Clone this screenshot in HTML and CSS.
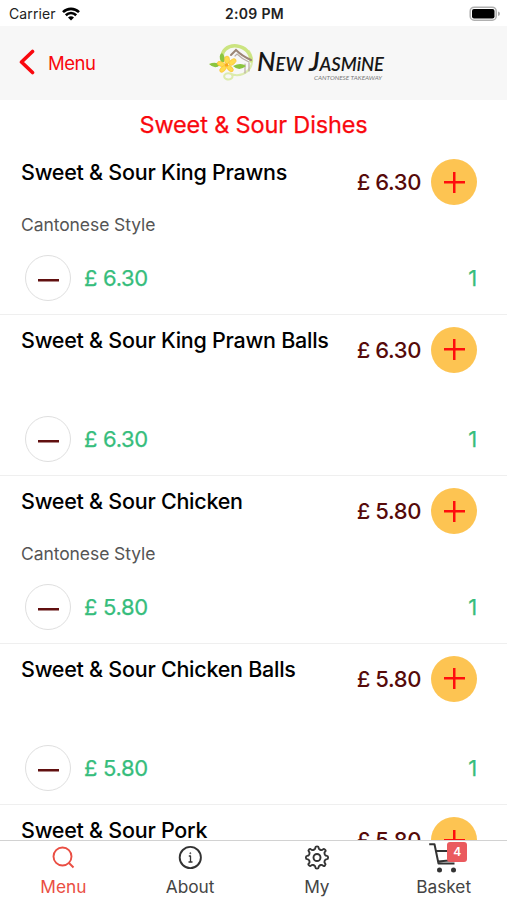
FILE: index.html
```html
<!DOCTYPE html>
<html lang="en">
<head>
<meta charset="utf-8">
<title>New Jasmine</title>
<link rel="stylesheet" href="styles.css">
</head>
<body>
<div class="app">
  <div class="status">
    <div class="carrier">Carrier
      <svg width="18" height="14" viewBox="0 0 18 14" fill="none" stroke="#000" stroke-width="2.6"><path d="M1 5.2C5.5.7 12.500.7 17 5.200M3.800 8.200C6.800 5.300 11.200 5.300 14.200 8.200"/><path d="M9 13.500 6 10.500Q9 7.900 12 10.500Z" fill="#000" stroke="none"/></svg>
    </div>
    <div class="clock">2:09 PM</div>
    <svg class="battery" width="32" height="16" viewBox="0 0 32 16"><rect x="2.200" y="1.200" width="26" height="13" rx="4" fill="#fff" stroke="#b0b0b0" stroke-width="1.500"/><rect x="4" y="3" width="22.500" height="9.500" rx="2" fill="#000"/><path d="M30 5.500q2 .5 2 2.300t-2 2.300z" fill="#aaa"/></svg>
  </div>
  <header class="header">
    <a class="back">
      <svg width="16" height="26" viewBox="0 0 16 26" fill="none" stroke="#f9080e" stroke-width="3.600" stroke-linecap="round" stroke-linejoin="round"><path d="M13.500 2.500 2.500 13 13.500 23.500"/></svg>
      <span>Menu</span>
    </a>
    <svg class="logo" width="180" height="44" viewBox="0 0 180 44">
      <g fill="none" stroke-linecap="round">
        <path d="M41 10c6 9 3 19-6 23-5 2-10 1-13-.5-5-1-8 3-4 5.500 4 1.500 8-1 6-4" stroke="#dcebad" stroke-width="2"/>
        <path d="M15 18C12 10 20 4 29 5c8 1 14 7 14 15" stroke="#cbe480" stroke-width="3.500"/>
        <path d="M23 14 28 9q6 6 15 10" stroke="#9b8576" stroke-width="2"/>
        <path d="M27 15l2-2q5 5 12 8M37 23v9M41 22v8" stroke="#b9ada5" stroke-width="1.200"/>
      </g>
      <path d="M1 23q7-3 11 1-5 5-11-1M25 25q8-4 13 0-7 6-13 0M13 21q-3-7 1-9 4 4 2 9" fill="#8bc53f"/>
      <g fill="#ffdb4d" stroke="#f7b92c" stroke-width=".5"><ellipse cx="19" cy="19" rx="2.600" ry="4"/><ellipse cx="13" cy="23" rx="4" ry="2.300" transform="rotate(20 13 23)"/><ellipse cx="24.500" cy="21" rx="4.200" ry="2.500" transform="rotate(-40 24.500 21)"/><ellipse cx="15" cy="28" rx="4" ry="2.300" transform="rotate(-45 15 28)"/><ellipse cx="22" cy="27.500" rx="4" ry="2.300" transform="rotate(45 22 27.500)"/></g>
      <circle cx="18.500" cy="24" r="1.700" fill="#f9a51e"/>
      <g class="wordmark">
        <text x="49" y="30" textLength="46" lengthAdjust="spacingAndGlyphs"><tspan class="cap">N</tspan>EW</text>
        <text x="101" y="30" textLength="75" lengthAdjust="spacingAndGlyphs"><tspan class="cap">J</tspan>ASMiNE</text>
      </g>
      <text class="tagline" x="106" y="38.500" textLength="68" lengthAdjust="spacingAndGlyphs">CANTONESE TAKEAWAY</text>
    </svg>
  </header>
  <main class="list">
    <h1>Sweet &amp; Sour Dishes</h1>
    <section class="item">
      <div class="top"><div class="name">Sweet &amp; Sour King Prawns</div><div class="price">£ 6.30</div><button class="add"></button></div>
      <div class="desc">Cantonese Style</div>
      <div class="bottom"><button class="remove"></button><div class="total">£ 6.30</div><div class="qty">1</div></div>
    </section>
    <section class="item short">
      <div class="top"><div class="name">Sweet &amp; Sour King Prawn Balls</div><div class="price">£ 6.30</div><button class="add"></button></div>
      <div class="bottom"><button class="remove"></button><div class="total">£ 6.30</div><div class="qty">1</div></div>
    </section>
    <section class="item">
      <div class="top"><div class="name">Sweet &amp; Sour Chicken</div><div class="price">£ 5.80</div><button class="add"></button></div>
      <div class="desc">Cantonese Style</div>
      <div class="bottom"><button class="remove"></button><div class="total">£ 5.80</div><div class="qty">1</div></div>
    </section>
    <section class="item short">
      <div class="top"><div class="name">Sweet &amp; Sour Chicken Balls</div><div class="price">£ 5.80</div><button class="add"></button></div>
      <div class="bottom"><button class="remove"></button><div class="total">£ 5.80</div><div class="qty">1</div></div>
    </section>
    <section class="item">
      <div class="top"><div class="name">Sweet &amp; Sour Pork</div><div class="price">£ 5.80</div><button class="add"></button></div>
    </section>
  </main>
  <nav class="tabs">
    <a class="tab active"><svg width="32" height="32" viewBox="0 0 32 32"><circle cx="15.500" cy="15.500" r="9"/><path d="m22 22 4.500 4.500"/></svg><span>Menu</span></a>
    <a class="tab"><svg width="32" height="32" viewBox="0 0 32 32"><circle cx="16.300" cy="16.500" r="10.600"/><path d="M14.800 15h1.700v6M14.500 21h4" stroke-width="1.300"/><circle cx="16.300" cy="12.200" r=".5" stroke-width="1"/></svg><span>About</span></a>
    <a class="tab"><svg width="32" height="32" viewBox="0 0 32 32"><path d="M13.400 8.500Q14.400 8 14.400 6.500Q14.400 5.400 16 5.400T17.600 6.500Q17.600 8 18.600 8.500L19.900 9Q21 9.400 22 8.300Q22.800 7.500 24 8.600T24.200 10.500Q23.100 11.500 23.500 12.600L24 13.900Q24.500 14.900 26 14.900Q27.100 14.900 27.100 16.500T26 18.100Q24.500 18.100 24 19.100L23.500 20.400Q23.100 21.500 24.200 22.500Q25 23.300 23.900 24.500T22 24.700Q21 23.600 19.900 24L18.600 24.500Q17.600 25 17.600 26.500Q17.600 27.600 16 27.600T14.400 26.500Q14.400 25 13.400 24.500L12.100 24Q11 23.600 10 24.700Q9.200 25.500 8 24.400T7.800 22.500Q8.900 21.500 8.500 20.400L8 19.100Q7.500 18.100 6 18.100Q4.900 18.100 4.900 16.500T6 14.900Q7.500 14.900 8 13.900L8.500 12.600Q8.900 11.500 7.800 10.500Q7 9.700 8.100 8.500T10 8.300Q11 9.400 12.100 9Z"/><circle cx="16" cy="16.500" r="3.500"/></svg><span>My</span></a>
    <a class="tab"><svg width="32" height="32" viewBox="0 0 32 32"><path d="M1.200 3.200h5.300l4 19.300h16M8 10h20.500l-2 9L10 20.500" stroke-width="2"/><circle cx="11.500" cy="29" r="2.500" class="wheel"/><circle cx="25.500" cy="29" r="2.500" class="wheel"/></svg><i class="badge">4</i><span>Basket</span></a>
  </nav>
</div>
</body>
</html>
```
FILE: styles.css
```css
* { box-sizing: border-box; }
body { margin: 0; font-family: Inter, "Liberation Sans", sans-serif; background: #fff; }
.app { width: 507px; height: 900px; display: flex; flex-direction: column; overflow: hidden; }
.status { height: 26px; flex: none; display: grid; grid-template-columns: 1fr auto 1fr; align-items: center; padding: 1px 7px 0 9px; font-size: 14px; color: #222; }
.carrier { display: flex; align-items: center; gap: 6px; letter-spacing: .1px; }
.clock { font-weight: 600; font-size: 14px; letter-spacing: .3px; }
.battery { justify-self: end; }
.header { height: 74px; flex: none; background: #f7f7f7; display: flex; align-items: center; }
.back { width: 208px; padding-left: 19px; display: flex; align-items: center; gap: 13px; color: #f9080e; font-size: 18.5px; letter-spacing: -.5px; }
.back svg { margin-top: -3px; }
.logo { margin-top: -1px; }
.wordmark { font: italic 600 19px Lato, sans-serif; fill: #171717; }
.cap { font-size: 27px; }
.tagline { font: italic 6px Lato, sans-serif; fill: #777; }
.list { flex: 1; min-height: 0; overflow: hidden; }
h1 { margin: 0; height: 47px; line-height: 49px; text-align: center; font-size: 23.5px; font-weight: 400; letter-spacing: -.15px; color: #f9080e; -webkit-text-stroke: .25px #f9080e; }
.item { height: 167.500px; border-bottom: 1px solid #efefef; padding: 12px 30px 13px 21px; display: flex; flex-direction: column; }
.item.short { height: 161.500px; }
.top { display: flex; height: 46px; flex: none; }
.name { flex: 1; font-size: 21.5px; line-height: 27px; font-weight: 500; letter-spacing: -.26px; white-space: nowrap; color: #000; }
.price { font-size: 22px; line-height: 46px; font-weight: 500; letter-spacing: -.4px; color: #560a0a; margin-right: 10px; }
button { width: 46px; height: 46px; flex: none; border: 0; border-radius: 50%; padding: 0; }
.add { background: linear-gradient(#ff0d0d, #ff0d0d) center / 21px 2.500px no-repeat, linear-gradient(#ff0d0d, #ff0d0d) center / 2.500px 21px no-repeat, #fdc452; }
.desc { margin-top: 8px; font-size: 17.5px; line-height: 24px; letter-spacing: -.08px; color: #555; }
.bottom { display: flex; align-items: center; margin-top: auto; padding-left: 4px; }
.remove { border: 1px solid #dfdfdf; background: linear-gradient(#611010, #611010) center 23px / 21px 2.500px no-repeat, #fff; }
.total, .qty { font-size: 22px; line-height: 46px; letter-spacing: -.3px; color: #36bd7c; -webkit-text-stroke: .25px #36bd7c; }
.total { margin-left: 13px; flex: 1; }
.tabs { height: 60px; flex: none; border-top: 1px solid #d2d2d2; display: grid; grid-template-columns: repeat(4, 1fr); background: #fff; }
.tab { display: flex; flex-direction: column; align-items: center; color: #444; font-size: 17.3px; line-height: 22px; position: relative; }
.tab svg { fill: none; stroke: #333; stroke-width: 1.900; stroke-linejoin: round; height: 32px; overflow: visible; }
.tab span { margin-top: 3px; }
.tab .wheel { fill: #333; stroke: none; }
.active { color: #ea4e43; }
.tab.active svg { stroke: #ea4e43; }
.badge { position: absolute; left: 67px; top: 1px; width: 20px; height: 20px; border-radius: 3px; background: #ea5a5e; color: #fff; font: 600 12px/20px Inter, sans-serif; text-align: center; }
```
